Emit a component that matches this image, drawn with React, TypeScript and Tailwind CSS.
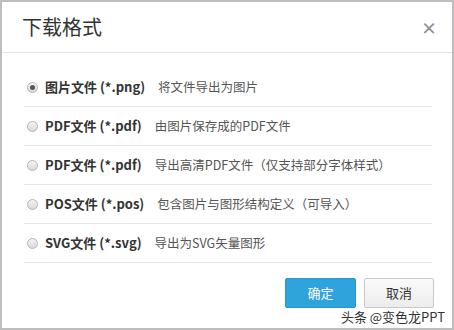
import React, { useState } from 'react';

interface FormatOption {
  label: string;
  desc: string;
}

const options: FormatOption[] = [
  { label: '图片文件 (*.png)', desc: '将文件导出为图片' },
  { label: 'PDF文件 (*.pdf)', desc: '由图片保存成的PDF文件' },
  { label: 'PDF文件 (*.pdf)', desc: '导出高清PDF文件（仅支持部分字体样式）' },
  { label: 'POS文件 (*.pos)', desc: '包含图片与图形结构定义（可导入）' },
  { label: 'SVG文件 (*.svg)', desc: '导出为SVG矢量图形' },
];

const font = "font-['Microsoft_YaHei','Noto_Sans_CJK_SC',sans-serif]";

// 单选圆点，灰色渐变外观
const Radio: React.FC<{ checked: boolean }> = ({ checked }) => (
  <span className="w-[11px] h-[11px] rounded-full border border-[#b5b5b5] bg-gradient-to-b from-[#f4f4f4] to-[#d9d9d9] flex items-center justify-center shrink-0">
    {checked && <span className="w-[5px] h-[5px] rounded-full bg-[#555]" />}
  </span>
);

export default function App() {
  const [selected, setSelected] = useState(0);

  return (
    <div className={`w-[454px] h-[330px] bg-white border-2 border-[#bdbdbd] flex flex-col ${font}`}>
      {/* Header */}
      <div className="h-[51px] flex items-center justify-between pl-[20px] pr-[15px] border-b border-[#e3e3e3] shrink-0">
        <h3 className="text-[20px] text-[#333] leading-none">下载格式</h3>
        <span className="text-[16px] font-bold text-[#8a8a8a] leading-none">×</span>
      </div>

      {/* Options */}
      <div className="flex flex-col pt-[15px] pl-[22px] pr-[20px]">
        {options.map((opt, idx) => (
          <div
            key={idx}
            onClick={() => setSelected(idx)}
            className="h-[39px] flex items-center border-b border-[#e8e8e8] pl-[3px] cursor-pointer"
          >
            <Radio checked={selected === idx} />
            <span className="ml-[7px] text-[13px] font-bold text-[#333] whitespace-nowrap">{opt.label}</span>
            <span className="ml-[13px] text-[12.5px] text-[#555] whitespace-nowrap">{opt.desc}</span>
          </div>
        ))}
      </div>

      {/* Footer */}
      <div className="relative flex justify-end gap-[8px] pr-[18px] pt-[15px]">
        <button className="w-[71px] h-[30px] rounded-[2px] bg-[#2fa4dc] border border-[#2a97cc] text-white text-[13px]">确定</button>
        <button className="w-[70px] h-[30px] rounded-[2px] bg-gradient-to-b from-[#fafafa] to-[#ececec] border border-[#c8c8c8] text-[#333] text-[13px]">取消</button>
        <span className="absolute right-[7px] top-[47px] text-[13px] leading-none text-[#333] [text-shadow:0_0_2px_#fff]">头条 @变色龙PPT</span>
      </div>
    </div>
  );
}
